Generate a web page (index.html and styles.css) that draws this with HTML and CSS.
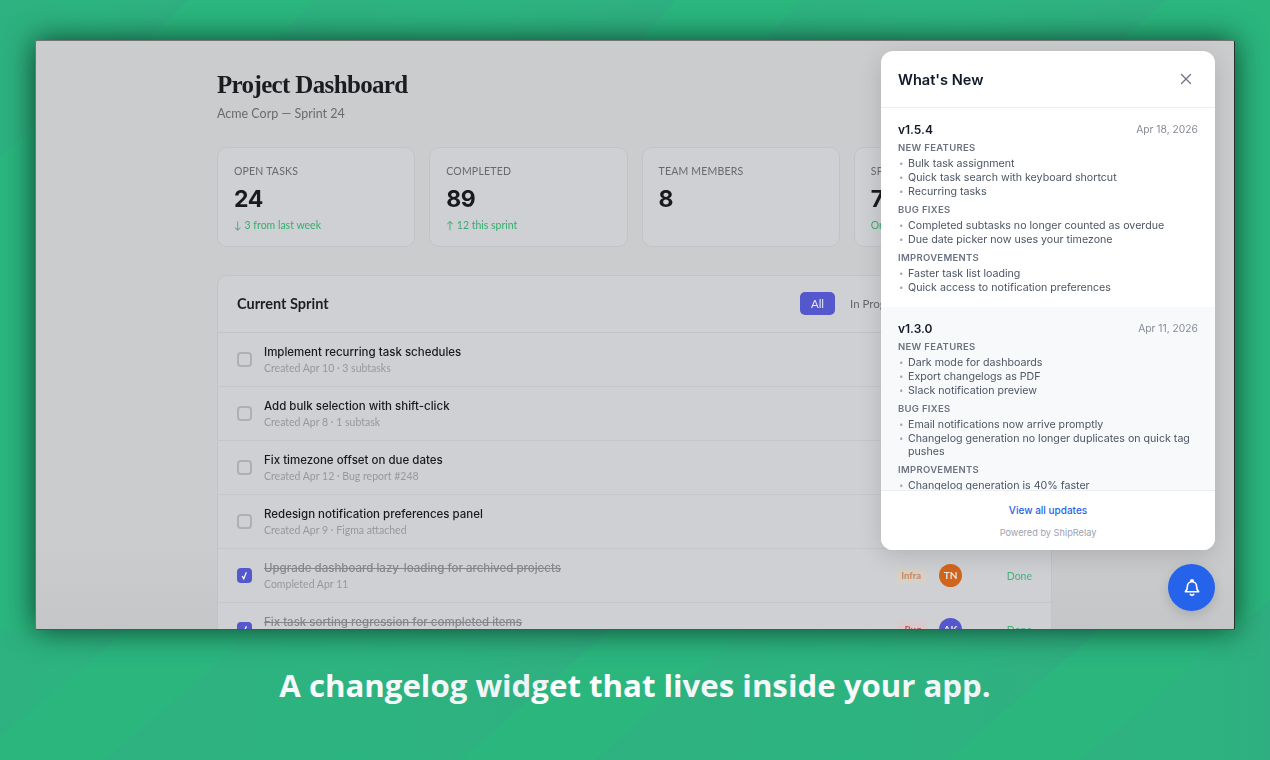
FILE: index.html
```html
<!DOCTYPE html>
<html lang="en">
<head>
    <meta charset="UTF-8">
    <title>ShipRelay changelog widget</title>
    <link rel="stylesheet" href="styles.css">
</head>
<body>
    <svg class="bands" viewBox="0 0 1270 760" width="1270" height="760" aria-hidden="true">
        <defs>
            <linearGradient id="bandFill" x1="0" y1="0" x2="1" y2="0">
                <stop offset="0" stop-color="#4a7f95" stop-opacity="0.09"/>
                <stop offset="0.5" stop-color="#4a7f95" stop-opacity="0.04"/>
                <stop offset="1" stop-color="#4a7f95" stop-opacity="0.13"/>
            </linearGradient>
        </defs>
        <polygon fill="url(#bandFill)" points="0,0 188,0 146,41 28,130 0,158"/>
        <polygon fill="url(#bandFill)" points="314,0 676,0 640,41 275,41"/>
        <polygon fill="url(#bandFill)" points="802,0 1166,0 1120,41 765,41"/>
        <polygon fill="url(#bandFill)" points="0,630 127,630 0,737"/>
        <polygon fill="url(#bandFill)" points="255,630 610,630 460,760 105,760"/>
        <polygon fill="url(#bandFill)" points="745,630 1100,630 947,760 595,760"/>
        <polygon fill="url(#bandFill)" points="1270,600 1270,760 1081,760"/>
    </svg>

    <div class="screen">
        <main class="dash">
            <h1 class="dash-title">Project Dashboard</h1>
            <p class="dash-sub">Acme Corp — Sprint 24</p>

            <section class="stats">
                <div class="stat">
                    <div class="stat-label">Open Tasks</div>
                    <div class="stat-value">24</div>
                    <div class="stat-delta">↓ 3 from last week</div>
                </div>
                <div class="stat">
                    <div class="stat-label">Completed</div>
                    <div class="stat-value">89</div>
                    <div class="stat-delta">↑ 12 this sprint</div>
                </div>
                <div class="stat">
                    <div class="stat-label">Team Members</div>
                    <div class="stat-value">8</div>
                </div>
                <div class="stat">
                    <div class="stat-label">Sprint Days</div>
                    <div class="stat-value">7</div>
                    <div class="stat-delta">On track</div>
                </div>
            </section>

            <section class="panel">
                <div class="panel-head">
                    <h2 class="panel-title">Current Sprint</h2>
                    <div class="tabs">
                        <span class="tab tab-active">All</span>
                        <span class="tab">In Progress</span>
                        <span class="tab">Review</span>
                        <span class="tab">Done</span>
                    </div>
                </div>

                <div class="row">
                    <span class="check"></span>
                    <div class="row-main">
                        <div class="row-title">Implement recurring task schedules</div>
                        <div class="row-sub">Created Apr 10 · 3 subtasks</div>
                    </div>
                </div>
                <div class="row">
                    <span class="check"></span>
                    <div class="row-main">
                        <div class="row-title">Add bulk selection with shift-click</div>
                        <div class="row-sub">Created Apr 8 · 1 subtask</div>
                    </div>
                </div>
                <div class="row">
                    <span class="check"></span>
                    <div class="row-main">
                        <div class="row-title">Fix timezone offset on due dates</div>
                        <div class="row-sub">Created Apr 12 · Bug report #248</div>
                    </div>
                </div>
                <div class="row">
                    <span class="check"></span>
                    <div class="row-main">
                        <div class="row-title">Redesign notification preferences panel</div>
                        <div class="row-sub">Created Apr 9 · Figma attached</div>
                    </div>
                </div>
                <div class="row row-done">
                    <span class="check check-on">
                        <svg viewBox="0 0 16 16" width="15" height="15"><path d="M5.500 8.500l1.700 3L10 4.500" fill="none" stroke="#fff" stroke-width="1.300"/></svg>
                    </span>
                    <div class="row-main">
                        <div class="row-title">Upgrade dashboard lazy-loading for archived projects</div>
                        <div class="row-sub">Completed Apr 11</div>
                    </div>
                    <span class="tag tag-infra">Infra</span>
                    <span class="avatar avatar-orange">TN</span>
                    <span class="status">Done</span>
                </div>
                <div class="row row-done">
                    <span class="check check-on">
                        <svg viewBox="0 0 16 16" width="15" height="15"><path d="M5.500 8.500l1.700 3L10 4.500" fill="none" stroke="#fff" stroke-width="1.300"/></svg>
                    </span>
                    <div class="row-main">
                        <div class="row-title">Fix task sorting regression for completed items</div>
                        <div class="row-sub">Completed Apr 10</div>
                    </div>
                    <span class="tag tag-bug">Bug</span>
                    <span class="avatar avatar-purple">AK</span>
                    <span class="status">Done</span>
                </div>
            </section>
        </main>

        <aside class="widget">
            <header class="widget-head">
                <h3 class="widget-title">What's New</h3>
                <svg class="widget-close" viewBox="0 0 24 24" width="18" height="18"><path d="M6 6l12 12M18 6L6 18" fill="none" stroke="#6b7280" stroke-width="1.700" stroke-linecap="round"/></svg>
            </header>
            <div class="widget-body">
                <article class="release">
                    <div class="release-head">
                        <span class="release-version">v1.5.4</span>
                        <span class="release-date">Apr 18, 2026</span>
                    </div>
                    <div class="release-label">New Features</div>
                    <ul class="release-list">
                        <li>Bulk task assignment</li>
                        <li>Quick task search with keyboard shortcut</li>
                        <li>Recurring tasks</li>
                    </ul>
                    <div class="release-label">Bug Fixes</div>
                    <ul class="release-list">
                        <li>Completed subtasks no longer counted as overdue</li>
                        <li>Due date picker now uses your timezone</li>
                    </ul>
                    <div class="release-label">Improvements</div>
                    <ul class="release-list">
                        <li>Faster task list loading</li>
                        <li>Quick access to notification preferences</li>
                    </ul>
                </article>
                <article class="release release-alt">
                    <div class="release-head">
                        <span class="release-version">v1.3.0</span>
                        <span class="release-date">Apr 11, 2026</span>
                    </div>
                    <div class="release-label">New Features</div>
                    <ul class="release-list">
                        <li>Dark mode for dashboards</li>
                        <li>Export changelogs as PDF</li>
                        <li>Slack notification preview</li>
                    </ul>
                    <div class="release-label">Bug Fixes</div>
                    <ul class="release-list">
                        <li>Email notifications now arrive promptly</li>
                        <li>Changelog generation no longer duplicates on quick tag pushes</li>
                    </ul>
                    <div class="release-label">Improvements</div>
                    <ul class="release-list">
                        <li>Changelog generation is 40% faster</li>
                    </ul>
                </article>
            </div>
            <footer class="widget-foot">
                <a class="widget-link">View all updates</a>
                <div class="widget-powered">Powered by ShipRelay</div>
            </footer>
        </aside>

        <button class="fab">
            <svg viewBox="0 1 24 24" width="20" height="20" fill="none" stroke="#fff" stroke-width="2" stroke-linecap="round" stroke-linejoin="round">
                <path d="M10.500 4.800a1.500 1.500 0 0 1 3 0"/>
                <path d="M6.500 11a5.500 5.500 0 0 1 11 0c0 4 1.200 5.500 2.500 6.500H4c1.300-1 2.500-2.500 2.500-6.500z"/>
                <path d="M10 20.500a2.300 2.300 0 0 0 4 0"/>
            </svg>
        </button>
    </div>

    <p class="caption">A changelog widget that lives inside your app.</p>
</body>
</html>
```

FILE: styles.css
```css
body {
    margin: 0;
    width: 1270px;
    height: 760px;
    overflow: hidden;
    position: relative;
    background-color: #2bb67e;
    font-family: 'Inter', sans-serif;
}

.bands {
    position: absolute;
    top: 0;
    left: 0;
}

.screen {
    position: relative;
    box-sizing: border-box;
    width: 1200px;
    height: 590px;
    margin: 40px 0 0 35px;
    overflow: hidden;
    background: linear-gradient(#cbccce 85%, #c5c6c8);
    border: 1px solid #6f7573;
    border-right-color: #26302c;
    border-bottom-color: #4e5654;
    border-radius: 2px;
    box-shadow: 0 0 30px rgba(0, 25, 18, 0.75);
}

.dash {
    width: 835px;
    margin-left: 181px;
    padding-top: 28px;
    color: #1a1a1e;
    filter: blur(0.3px);
}

.dash-title {
    margin: 0;
    font-family: 'Liberation Serif', serif;
    font-size: 25px;
    line-height: 32px;
    font-weight: 700;
    letter-spacing: -0.65px;
    color: #1c1c20;
}

.dash-sub {
    margin: 5px 0 0;
    font-family: 'Lato', sans-serif;
    font-size: 12.5px;
    line-height: 16px;
    color: #6a6b6f;
}

.stats {
    display: grid;
    grid-template-columns: repeat(4, 1fr);
    gap: 14px;
    margin-top: 25px;
}

.stat {
    box-sizing: border-box;
    height: 100px;
    padding: 16px 16px 0;
    background-color: #cfd0d4;
    border: 1px solid #c2c3c6;
    border-radius: 10px;
}

.stat-label {
    font-family: 'Lato', sans-serif;
    font-size: 10.5px;
    line-height: 14px;
    letter-spacing: 0.2px;
    text-transform: uppercase;
    color: #68696d;
}

.stat-value {
    margin-top: 7px;
    font-size: 23px;
    line-height: 28px;
    font-weight: 700;
    letter-spacing: -0.5px;
    color: #1a1a1e;
}

.stat-delta {
    margin-top: 5px;
    font-family: 'Lato', sans-serif;
    font-size: 10.5px;
    line-height: 14px;
    color: #36ad6e;
}

.panel {
    margin-top: 28px;
    background-color: #cfd0d4;
    border: 1px solid #c2c3c6;
    border-radius: 10px 10px 0 0;
}

.panel-head {
    display: flex;
    align-items: center;
    justify-content: space-between;
    box-sizing: border-box;
    height: 57px;
    padding: 0 18px 1px 19px;
    border-bottom: 1px solid #c3c4c7;
}

.panel-title {
    margin: 0;
    font-family: 'Lato', sans-serif;
    font-size: 14.5px;
    font-weight: 700;
    color: #1d1d21;
}

.tabs {
    display: flex;
    align-items: center;
    gap: 4px;
}

.tab {
    padding: 0 11px;
    font-family: 'Lato', sans-serif;
    font-size: 11.5px;
    line-height: 23px;
    color: #66676b;
}

.tab-active {
    background-color: #5557cc;
    border-radius: 5px;
    color: #e6e6f4;
}

.row {
    display: flex;
    align-items: center;
    box-sizing: border-box;
    height: 54px;
    padding: 0 19px;
    border-bottom: 1px solid #c5c6c9;
}

.check {
    display: flex;
    align-items: center;
    justify-content: center;
    box-sizing: border-box;
    flex: none;
    width: 15px;
    height: 15px;
    margin-right: 12px;
    border: 2px solid #afb0b3;
    border-radius: 4px;
}

.check-on {
    background-color: #5557cc;
    border-color: #5557cc;
}

.check-on svg {
    flex: none;
}

.row-main {
    flex: 1;
}

.row-title {
    font-family: 'Inter', sans-serif;
    font-size: 11.5px;
    line-height: 16px;
    font-weight: 500;
    color: #1a1a1e;
}

.row-sub {
    margin-top: 1px;
    font-family: 'Lato', sans-serif;
    font-size: 10.5px;
    line-height: 15px;
    color: #97989c;
}

.row-done .row-title {
    color: #85868a;
    text-decoration: line-through;
}

.tag {
    padding: 0 6px;
    font-family: 'Lato', sans-serif;
    font-size: 9.5px;
    font-weight: 700;
    line-height: 17px;
    border-radius: 3px;
}

.tag-infra {
    background-color: #d6d0ca;
    color: #cf8557;
}

.tag-bug {
    background-color: #d8c9cc;
    color: #c4595c;
}

.avatar {
    flex: none;
    width: 23px;
    height: 23px;
    margin-left: 12px;
    border-radius: 50%;
    font-family: 'Lato', sans-serif;
    font-size: 10px;
    font-weight: 700;
    line-height: 23px;
    text-align: center;
    color: #e8e4e0;
}

.avatar-orange {
    background-color: #d2651e;
}

.avatar-purple {
    background-color: #5557cc;
}

.status {
    flex: none;
    width: 58px;
    margin-left: 12px;
    font-family: 'Lato', sans-serif;
    font-size: 10.5px;
    text-align: right;
    color: #45b27a;
}

.widget {
    position: absolute;
    top: 10px;
    right: 19px;
    display: flex;
    flex-direction: column;
    width: 334px;
    height: 499px;
    overflow: hidden;
    background-color: #fff;
    border-radius: 12px;
    box-shadow: 0 6px 24px rgba(0, 0, 0, 0.14);
    filter: blur(0.25px);
}

.widget-head {
    display: flex;
    align-items: center;
    justify-content: space-between;
    box-sizing: border-box;
    flex: none;
    height: 57px;
    padding: 0 20px 0 17px;
    border-bottom: 1px solid #eceef1;
}

.widget-title {
    margin: 1px 0 0;
    font-size: 14.6px;
    font-weight: 600;
    color: #111827;
}

.widget-body {
    flex: 1;
    overflow: hidden;
}

.release {
    padding: 13px 17px;
}

.release-alt {
    background-color: #f8f9fb;
}

.release-head {
    display: flex;
    align-items: center;
    justify-content: space-between;
    height: 16px;
}

.release-version {
    font-size: 12px;
    font-weight: 600;
    color: #111827;
}

.release-date {
    font-size: 10.3px;
    color: #858b94;
}

.release-label {
    margin-top: 5px;
    font-size: 9.5px;
    line-height: 12px;
    font-weight: 600;
    letter-spacing: 0.3px;
    text-transform: uppercase;
    color: #6b7280;
}

.release-list + .release-label {
    margin-top: 6px;
}

.release-list {
    margin: 3px 0 0;
    padding: 0;
    list-style: none;
}

.release-list li {
    display: flex;
    margin-top: 1px;
    font-size: 10.65px;
    line-height: 13px;
    color: #4b5563;
}

.release-list li::before {
    content: "•";
    flex: none;
    width: 10px;
    padding-left: 1px;
    box-sizing: border-box;
    font-size: 8px;
    color: #a5abb4;
}

.widget-foot {
    box-sizing: border-box;
    flex: none;
    height: 60px;
    padding-top: 12px;
    border-top: 1px solid #eceef1;
    background-color: #fff;
    text-align: center;
}

.widget-link {
    display: block;
    font-size: 10px;
    line-height: 14px;
    font-weight: 500;
    color: #2563eb;
}

.widget-powered {
    margin-top: 9px;
    font-size: 9.2px;
    line-height: 14px;
    color: #9ca3af;
}

.fab {
    position: absolute;
    right: 19px;
    bottom: 18px;
    display: flex;
    align-items: center;
    justify-content: center;
    width: 47px;
    height: 47px;
    padding: 0;
    background-color: #2563eb;
    border: none;
    border-radius: 50%;
    box-shadow: 0 4px 12px rgba(0, 0, 0, 0.14);
}

.caption {
    margin: 33px 0 0;
    font-family: 'Open Sans', sans-serif;
    font-size: 31.2px;
    line-height: 44px;
    font-weight: 700;
    text-align: center;
    color: #fff;
}
```
